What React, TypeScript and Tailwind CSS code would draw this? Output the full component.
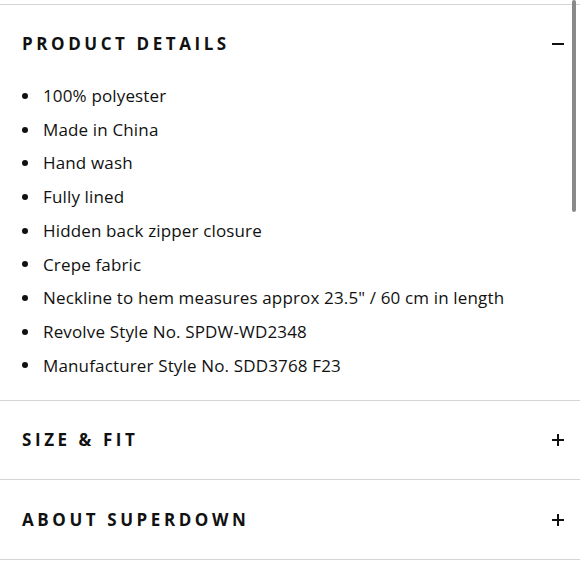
import { ReactNode } from "react";

const details = [
    "100% polyester",
    "Made in China",
    "Hand wash",
    "Fully lined",
    "Hidden back zipper closure",
    "Crepe fabric",
    "Neckline to hem measures approx 23.5\" / 60 cm in length",
    "Revolve Style No. SPDW-WD2348",
    "Manufacturer Style No. SDD3768 F23",
];

function Minus() {
    return <span className="block w-[12px] h-[2px] bg-[#111]"></span>;
}

function Plus() {
    return (
        <span className="relative block w-[12px] h-[12px]">
            <span className="absolute left-0 top-[5px] w-[12px] h-[2px] bg-[#111]"></span>
            <span className="absolute left-[5px] top-0 w-[2px] h-[12px] bg-[#111]"></span>
        </span>
    );
}

function Header({ title, icon, height }: { title: string; icon: ReactNode; height: string }) {
    return (
        <div className={`flex items-center justify-between pl-[22px] pr-[16px] ${height}`}>
            <h2 className="text-[17px] font-bold tracking-[0.21em] text-[#111]">{title}</h2>
            {icon}
        </div>
    );
}

export default function App() {
    return (
        <div
            className="relative w-[580px] h-[580px] bg-white overflow-hidden"
            style={{ fontFamily: '"Open Sans", "Liberation Sans", sans-serif' }}
        >
            <div className="h-[4px]"></div>
            <section className="border-t-[1.5px] border-[#d4d4d4]">
                <Header title="PRODUCT DETAILS" icon={<Minus />} height="h-[74px] pt-[3px]" />
                <ul className="pb-[18px]">
                    {details.map((d) => (
                        <li key={d} className="flex items-center h-[33.7px] pl-[22px] text-[17px] tracking-[0.15px] text-[#111]">
                            <span className="w-[6px] h-[6px] rounded-full bg-[#111] mr-[15px]"></span>
                            {d}
                        </li>
                    ))}
                </ul>
            </section>
            <section className="border-t-[1.5px] border-[#d4d4d4]">
                <Header title="SIZE & FIT" icon={<Plus />} height="h-[78px]" />
            </section>
            <section className="border-t-[1.5px] border-b-[1.5px] border-[#d4d4d4]">
                <Header title="ABOUT SUPERDOWN" icon={<Plus />} height="h-[79px]" />
            </section>
            <div className="absolute right-[4px] top-0 w-[4px] h-[212px] rounded-full bg-[#8a8a8a]"></div>
        </div>
    );
}
